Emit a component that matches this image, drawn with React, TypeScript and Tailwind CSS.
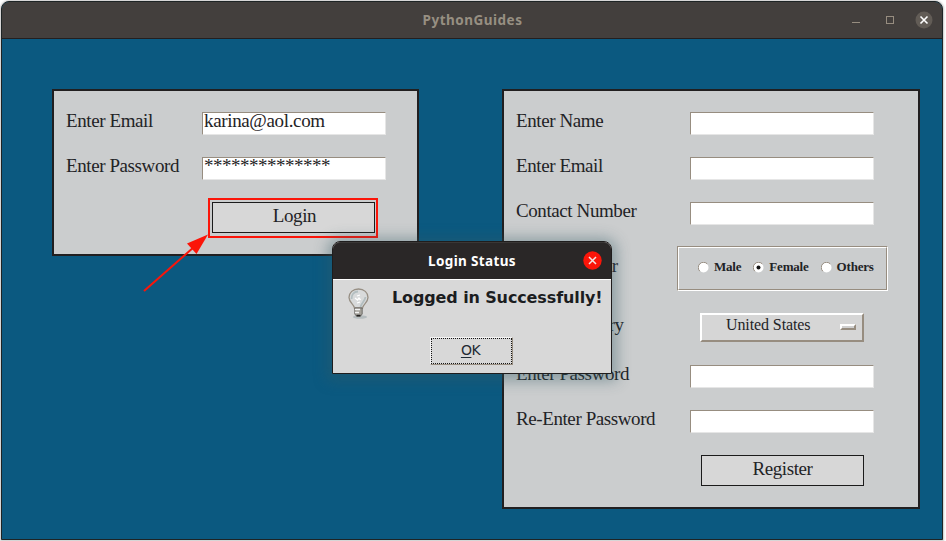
import React from "react";

const serif = "font-['Liberation_Serif',serif]";

function Label({ children }: { children: React.ReactNode }) {
  return (
    <span className={`${serif} text-[19px] leading-[23px] tracking-[-0.41px] whitespace-nowrap text-[#1f2326]`}>
      {children}
    </span>
  );
}

function Field({ value = "", password = false }: { value?: string; password?: boolean }) {
  return (
    <div
      className={`${serif} h-[23px] w-[184px] border border-t-[#978d80] border-l-[#978d80] border-r-[#e6e6e6] border-b-[#e6e6e6] bg-white pl-px text-[19px] text-[#1f2326] ${password ? "leading-[15px] tracking-[-0.5px]" : "leading-[16px] tracking-[-0.35px]"}`}
    >
      {value}
    </div>
  );
}

function Row({ label, children, className = "" }: { label: string; children: React.ReactNode; className?: string }) {
  return (
    <div className={`flex h-[23px] items-center ${className}`}>
      <div className="-mt-[6px] w-[174px]">
        <Label>{label}</Label>
      </div>
      {children}
    </div>
  );
}

function Radio({ label, checked = false }: { label: string; checked?: boolean }) {
  return (
    <div className="flex items-center gap-[5px]">
      <svg width="11" height="11" viewBox="0 0 11 11">
        <circle cx="5.5" cy="5.5" r="5" fill="#fff" />
        <path d="M1.8 9.2A5 5 0 0 1 9.2 1.8" fill="none" stroke="#978d80" strokeWidth="1" />
        {checked && <circle cx="5.5" cy="5.5" r="2" fill="#111" />}
      </svg>
      <span className={`${serif} -mt-[2px] text-[13px] leading-[16px] font-bold tracking-[-0.2px] text-[#1f2326]`}>{label}</span>
    </div>
  );
}

function Bulb() {
  return (
    <svg width="24" height="32" viewBox="0 0 24 32" fill="none">
      <ellipse cx="13" cy="29" rx="7" ry="1.800" fill="#b5bcbe" />
      <path
        d="M7.500 20C7.200 16.500 2 14.500 2 9.500C2 4.500 6 1 11.500 1S21 4.500 21 9.500C21 14.500 15.800 16.500 15.500 20Z"
        fill="#d8dadb"
        stroke="#978f84"
        strokeWidth="1.300"
      />
      <path d="M4.500 11C4.500 6 7.500 3.500 11 3.500M18.500 9C18 13 14.500 15 13.500 19" stroke="#b3bec0" strokeWidth="1.800" />
      <path d="M8 10l2.500 2 1.500-2 1.500 2M10 15l3-1M10 8l3-1" stroke="#fff" strokeWidth="1.300" />
      <path d="M7.800 20h7.400v6l-2 2.500h-3.400l-2-2.500z" fill="#a5a29b" stroke="#5c5955" strokeWidth="0.800" />
      <path d="M8 21.500h5M8 24.500h4" stroke="#f2f2f2" strokeWidth="1.400" />
      <path d="M9.500 27.500h4" stroke="#222" strokeWidth="1.400" />
    </svg>
  );
}

function LoginDialog() {
  return (
    <div className="absolute top-[241px] left-[332px] h-[133px] w-[280px] rounded-t-[8px] shadow-[0_2px_14px_5px_rgba(50,90,100,0.42)]">
      <div className="flex h-full flex-col rounded-t-[8px] border border-[#1f1d1d] bg-[#d8d8d8]">
        <div className="relative flex h-[37px] items-center justify-center rounded-t-[7px] border-t border-[#3a3736] bg-[#2a2727]">
          <span className="-mt-px font-['Noto_Sans',sans-serif] text-[13.5px] leading-[18px] font-bold tracking-[0.35px] text-white">
            Login Status
          </span>
          <svg className="absolute top-[8px] right-[9px]" width="19" height="19" viewBox="0 0 19 19">
            <circle cx="9.500" cy="9.500" r="9.200" fill="#fb1509" />
            <path d="M6 6l7 7M13 6l-7 7" stroke="#f4e6e4" strokeWidth="1.500" />
          </svg>
        </div>
        <div className="flex flex-1 flex-col border-t border-white">
          <div className="flex pt-[8px] pl-[14px]">
            <Bulb />
            <span className="ml-[21px] font-['DejaVu_Sans',sans-serif] text-[16px] leading-[20px] font-bold tracking-[-0.12px] whitespace-nowrap text-[#1b1d1f]">
              Logged in Successfully!
            </span>
          </div>
          <div className="mt-[17px] ml-[97px] h-[28px] w-[83px] border-t border-l border-[#f5f5f5] border-r border-b border-r-[#978d80] border-b-[#978d80]">
            <div className="flex h-full items-center justify-center border border-dotted border-[#151515] pb-[2px] font-['DejaVu_Sans',sans-serif] text-[14px] leading-none tracking-[-0.5px] text-[#1f2a33]">
              <span className="pr-[2px]">
                <span className="underline underline-offset-[2px]">O</span>K
              </span>
            </div>
          </div>
        </div>
      </div>
    </div>
  );
}

export default function App() {
  return (
    <div className="relative h-[541px] w-[946px] overflow-hidden bg-white pt-px pl-px">
      <div className="flex h-[539px] w-[942px] flex-col overflow-hidden rounded-t-[8px] border border-[#1e2425] bg-[#0b5980] shadow-[0_0_2px_1px_rgba(0,0,0,0.22)]">
        <div className="flex h-[37px] items-center border-b border-[#231f20] bg-[#433f3d]">
          <div className="w-[130px]" />
          <div className="flex-1 pl-px text-center font-['Noto_Sans',sans-serif] text-[13.5px] leading-[18px] font-bold tracking-[0.5px] text-[#978f82]">
            PythonGuides
          </div>
          <div className="w-[130px]">
            <svg className="ml-auto" width="92" height="20" viewBox="0 0 92 20">
              <path d="M2 12.500h8" stroke="#978d80" />
              <rect x="36.500" y="6.500" width="7" height="7" fill="none" stroke="#978d80" />
              <circle cx="74" cy="10" r="8.500" fill="#625c56" />
              <path d="M70.500 6.500l7 7M77.500 6.500l-7 7" stroke="#fff" strokeWidth="1.600" />
            </svg>
          </div>
        </div>
        <div className="flex items-start gap-[83px] pt-[50px] pl-[50px]">
          <div className="h-[167px] w-[367px] shrink-0 border-2 border-[#211f20] bg-[#cbcdce] pt-[21px] pl-[12px]">
            <div className="flex">
              <div className="-mt-[3px] w-[136px]">
                <Label>Enter Email</Label>
              </div>
              <Field value="karina@aol.com" />
            </div>
            <div className="mt-[22px] flex">
              <div className="-mt-[3px] w-[136px]">
                <Label>Enter Password</Label>
              </div>
              <Field value="**************" password />
            </div>
            <div className="mt-[18px] ml-[142px] h-[40px] w-[170px] border-2 border-[#fb1509] p-[2px]">
              <div className="flex h-[31px] w-[163px] items-center justify-center border border-[#1b1b1b] bg-[#d7d7d7] pb-[4px] pl-[2px]">
                <Label>Login</Label>
              </div>
            </div>
          </div>
          <div className="h-[420px] w-[418px] shrink-0 border-2 border-[#211f20] bg-[#cbcdce] pt-[21px] pl-[12px]">
            <Row label="Enter Name"><Field /></Row>
            <Row label="Enter Email" className="mt-[22px]"><Field /></Row>
            <Row label="Contact Number" className="mt-[22px]"><Field /></Row>
            <div className="mt-[21px] flex h-[45px] items-center">
              <div className="-mt-[6px] w-[161px]"><Label>Select Gender</Label></div>
              <div className="h-[45px] w-[211px] border border-[#978d80] border-r-white border-b-white">
                <div className="flex h-full items-center gap-[12px] border border-white border-r-[#978d80] border-b-[#978d80] pb-[2px] pl-[19px]">
                  <Radio label="Male" />
                  <Radio label="Female" checked />
                  <Radio label="Others" />
                </div>
              </div>
            </div>
            <div className="mt-[22px] flex h-[29px] items-center">
              <div className="-mt-[6px] w-[184px]"><Label>Select Country</Label></div>
              <div className="flex h-[29px] w-[164px] items-center border-2 border-white border-r-[#978d80] border-b-[#978d80] bg-[#d6d6d6]">
                <span className={`${serif} -mt-[6px] w-[138px] pl-[24px] text-[16px] leading-[20px] tracking-[-0.1px] whitespace-nowrap text-[#1f2326]`}>
                  United States
                </span>
                <span className="-mt-px h-[6px] w-[16px] border-2 border-white border-r-[#978d80] border-b-[#978d80] bg-[#d0d0d0]" />
              </div>
            </div>
            <Row label="Enter Password" className="mt-[23px]"><Field /></Row>
            <Row label="Re-Enter Password" className="mt-[22px]"><Field /></Row>
            <div className="mt-[22px] ml-[185px] flex h-[31px] w-[163px] items-center justify-center border border-[#1b1b1b] bg-[#d7d7d7] pb-[4px]">
              <Label>Register</Label>
            </div>
          </div>
        </div>
      </div>
      <svg className="absolute top-[230px] left-[140px]" width="72" height="64" viewBox="0 0 72 64">
        <path d="M4 61L54 17" stroke="#fb1509" strokeWidth="2" />
        <path d="M68 4.500L47 13.500L56.500 24Z" fill="#fb1509" />
      </svg>
      <LoginDialog />
    </div>
  );
}
